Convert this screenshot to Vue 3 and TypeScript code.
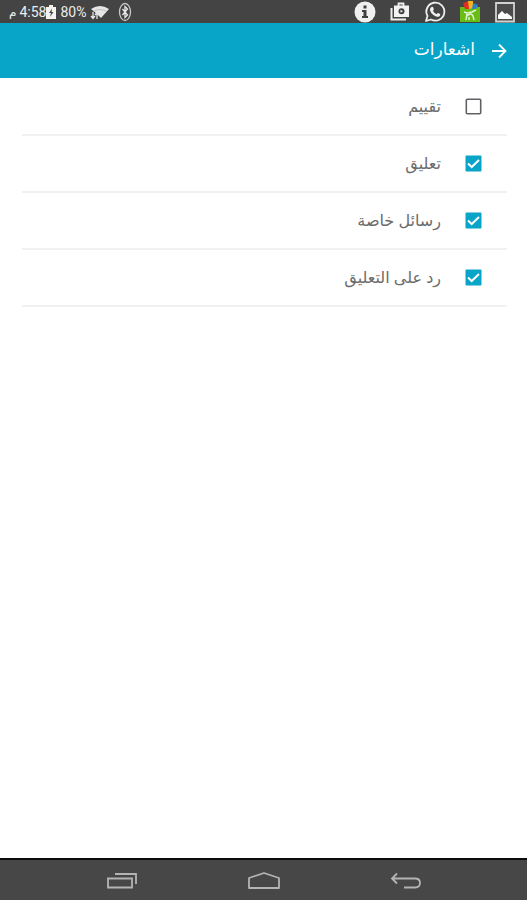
<script setup lang="ts">
import { ref } from 'vue'

interface NotificationOption {
  id: string
  label: string
  enabled: boolean
}

const options = ref<NotificationOption[]>([
  { id: 'rating', label: 'تقييم', enabled: false },
  { id: 'comment', label: 'تعليق', enabled: true },
  { id: 'messages', label: 'رسائل خاصة', enabled: true },
  { id: 'reply', label: 'رد على التعليق', enabled: true },
])
</script>

<template>
  <div class="screen" dir="rtl">
    <div class="status" dir="ltr">
      <div class="system">
        <span class="clock"><span class="period">م</span><span>4:58</span></span>
        <svg class="battery" viewBox="0 0 10 14" width="10" height="14">
          <path d="M3 0h4v2h3v12H0V2h3z" fill="#f2f2f2" />
          <path d="M6 3.500 3 8h2l-1 4 3.500-5H5.500z" fill="#444445" />
        </svg>
        <span class="percent">80%</span>
        <svg class="wifi" viewBox="0 0 20 16" width="20" height="16">
          <path d="M1 5Q10-1 19 5L11 14 7 10z" fill="#e6e6e6" />
          <path d="M3 7.500q7-4 14 0" fill="none" stroke="#aaa" stroke-width="0.600" />
          <path d="M3 8v6M1 12l2 2.500L5 12M7 15V9M5 11l2-2.500L9 11" fill="none" stroke="#e6e6e6" stroke-width="1.300" />
        </svg>
        <svg class="bluetooth" viewBox="0 0 14 20" width="14" height="20">
          <ellipse cx="7" cy="10" rx="5.500" ry="8.500" fill="none" stroke="#c9c9c9" stroke-width="1.300" />
          <path d="M4.500 7l5 6L7 15.500v-11L9.500 7l-5 6" fill="none" stroke="#e8e8e8" stroke-width="1.300" />
        </svg>
      </div>
      <div class="notices">
        <svg viewBox="0 0 22 22" width="22" height="22">
          <circle cx="11" cy="11" r="10.500" fill="#f0f0f0" />
          <path d="M9.500 4.500h3v3h-3zM8 9h4.500v6H14v2H8v-2h1.500v-4H8z" fill="#3f3f40" />
        </svg>
        <svg viewBox="0 0 22 22" width="22" height="22">
          <path d="M2.500 7v11.500H17" fill="none" stroke="#eee" stroke-width="2" />
          <path d="M9.500 5V2.500h5V5" fill="none" stroke="#eee" stroke-width="1.800" />
          <path d="M5 4.500h15V16H5z" fill="#f2f2f2" />
          <circle cx="12.500" cy="10.300" r="3" fill="#3f3f40" />
          <path d="M11.500 8.800l2.500 1.500-2.500 1.500z" fill="#eee" />
        </svg>
        <svg viewBox="0 0 22 22" width="22" height="22">
          <path d="M2 20l1.500-5a9 9 0 1 1 3.500 3.500z" fill="none" stroke="#eee" stroke-width="1.800" stroke-linejoin="round" />
          <path d="M7.500 6C9 5 9.500 7 9.800 8.200c.2.700-.8 1.200-.8 1.600.6 1.600 1.900 2.700 3.500 3.300.5 0 1-1.300 1.500-1.100l2.200 1c.4 1.900-1.200 3-2.800 2.800C9.600 15.200 6 11.500 6 8.500 6 7.500 6.700 6.500 7.500 6z" fill="#eee" />
        </svg>
        <svg viewBox="0 0 22 22" width="22" height="22">
          <path d="M1 6h20v15H1z" fill="#69bd17" />
          <path d="M4 2l6-2v8H6z" fill="#e32c22" />
          <path d="M9 0h5v7l-4 1z" fill="#f5b51c" />
          <path d="M14 2l5 2-2 4h-4z" fill="#2f7fd0" />
          <path d="M5 11l3 1 5-1 4-2M8 12l-1 7M8 15q4-4 6 0l1 4M10 19v-3" fill="none" stroke="#e3f5cf" stroke-width="1.500" />
        </svg>
        <svg viewBox="0 0 22 22" width="22" height="22">
          <path d="M2 2h18v18.500H2z" fill="#4c4c4d" stroke="#d2d2d2" stroke-width="1.800" />
          <path d="M4 18v-4l4-4 3 3 2-1 5 4v2z" fill="#fff" />
        </svg>
      </div>
    </div>

    <header class="toolbar">
      <button class="back" type="button" aria-label="رجوع">
        <svg viewBox="0 0 16 16" width="16" height="16">
          <path d="M1 8h13M8 1.500 14.500 8 8 14.500" fill="none" stroke="#fff" stroke-width="1.800" />
        </svg>
      </button>
      <h1>اشعارات</h1>
    </header>

    <main>
      <ul class="options">
        <li v-for="option in options" :key="option.id">
          <label :for="option.id">
            <input :id="option.id" v-model="option.enabled" type="checkbox" />
            <svg class="box" viewBox="0 0 17 17" width="17" height="17" aria-hidden="true">
              <template v-if="option.enabled">
                <rect x="0.500" y="0.500" width="16" height="16" rx="1" fill="#08a5c9" />
                <path d="M3 8.500 6.700 12 14 5" fill="none" stroke="#fff" stroke-width="2" />
              </template>
              <rect v-else x="1.300" y="1.300" width="14.400" height="14.400" rx="1" fill="#fff" stroke="#626064" stroke-width="1.600" />
            </svg>
            <span>{{ option.label }}</span>
          </label>
        </li>
      </ul>
    </main>

    <nav class="system-nav" dir="ltr">
      <button type="button" aria-label="التطبيقات الأخيرة">
        <svg viewBox="0 0 34 20" width="34" height="20">
          <path d="M3 8.500h24v9H3zM10 4h21v10" fill="none" stroke="#b4b4b5" stroke-width="1.800" />
        </svg>
      </button>
      <button type="button" aria-label="الرئيسية">
        <svg viewBox="0 0 34 20" width="34" height="20">
          <path d="M2 18V8l15-5L32 8v10z" fill="none" stroke="#b4b4b5" stroke-width="1.800" stroke-linejoin="round" />
        </svg>
      </button>
      <button type="button" aria-label="رجوع">
        <svg viewBox="0 0 34 20" width="34" height="20">
          <path d="M8 3.500 3 8.500l5 5M3 8.500h23q5 0 5 4.500t-5 4.500H15" fill="none" stroke="#b4b4b5" stroke-width="1.800" />
        </svg>
      </button>
    </nav>
  </div>
</template>

<style>
body {
  margin: 0;
  background: #fff;
}
</style>

<style scoped>
.screen {
  display: flex;
  flex-direction: column;
  min-height: 100vh;
  font-family: "Noto Sans", "DejaVu Sans", sans-serif;
}

svg {
  display: block;
  flex: none;
}

button {
  padding: 0;
  border: 0;
  background: none;
  cursor: pointer;
}

.status {
  display: flex;
  align-items: center;
  justify-content: space-between;
  height: 23px;
  padding: 0 11px 0 9px;
  background: #444445;
  color: #ececec;
  font: 14px/20px Roboto, "DejaVu Sans", sans-serif;
}

.system,
.notices,
.clock {
  display: flex;
  align-items: center;
}

.system {
  gap: 4px;
}

.clock {
  gap: 3px;
}

.period {
  font-size: 12px;
}

.battery {
  margin-left: -4px;
}

.bluetooth {
  margin-left: 4px;
}

.notices {
  gap: 13px;
}

.toolbar {
  display: flex;
  align-items: center;
  gap: 16px;
  height: 55px;
  padding: 0 20px;
  background: #08a5c9;
  color: #fff;
}

h1 {
  margin: 0;
  padding-bottom: 4px;
  font-size: 17px;
  font-weight: 400;
  line-height: 24px;
}

main {
  flex: 1;
  padding-top: 1px;
}

.options {
  margin: 0;
  padding: 0 20px 0 22px;
  list-style: none;
}

li {
  border-bottom: 2px solid #f1f1f1;
}

label {
  display: flex;
  align-items: center;
  gap: 24px;
  height: 55px;
  padding: 0 25px;
  color: #6b6b6b;
  font-size: 16px;
  line-height: 24px;
  cursor: pointer;
}

label span {
  padding-bottom: 2px;
}

input {
  position: absolute;
  width: 17px;
  height: 17px;
  margin: 0;
  opacity: 0;
}

input:focus-visible + .box {
  outline: 2px solid #8bd4e6;
}

.system-nav {
  display: flex;
  align-items: center;
  justify-content: center;
  gap: 108px;
  height: 40px;
  border-top: 2px solid #0c0c0c;
  background: #474748;
}
</style>
